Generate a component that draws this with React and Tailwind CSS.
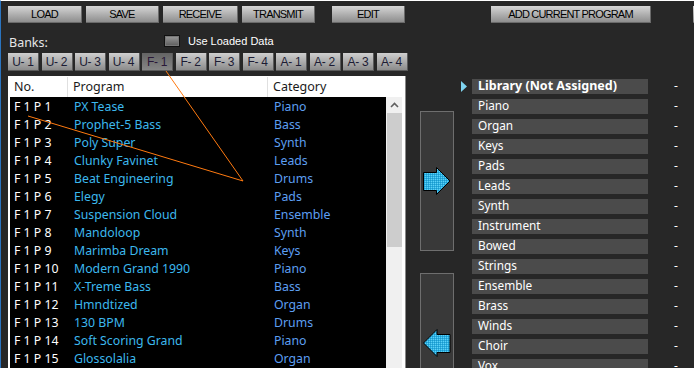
import React from "react";

const rows = [
  ["F 1 P 1", "PX Tease", "Piano"],
  ["F 1 P 2", "Prophet-5 Bass", "Bass"],
  ["F 1 P 3", "Poly Super", "Synth"],
  ["F 1 P 4", "Clunky Favinet", "Leads"],
  ["F 1 P 5", "Beat Engineering", "Drums"],
  ["F 1 P 6", "Elegy", "Pads"],
  ["F 1 P 7", "Suspension Cloud", "Ensemble"],
  ["F 1 P 8", "Mandoloop", "Synth"],
  ["F 1 P 9", "Marimba Dream", "Keys"],
  ["F 1 P 10", "Modern Grand 1990", "Piano"],
  ["F 1 P 11", "X-Treme Bass", "Bass"],
  ["F 1 P 12", "Hmndtized", "Organ"],
  ["F 1 P 13", "130 BPM", "Drums"],
  ["F 1 P 14", "Soft Scoring Grand", "Piano"],
  ["F 1 P 15", "Glossolalia", "Organ"],
];

const cats = [
  "Library (Not Assigned)",
  "Piano",
  "Organ",
  "Keys",
  "Pads",
  "Leads",
  "Synth",
  "Instrument",
  "Bowed",
  "Strings",
  "Ensemble",
  "Brass",
  "Winds",
  "Choir",
  "Vox",
];

const banks = ["U- 1", "U- 2", "U- 3", "U- 4", "F- 1", "F- 2", "F- 3", "F- 4", "A- 1", "A- 2", "A- 3", "A- 4"];

function TopBtn({ w, children }) {
  return (
    <div
      className="h-[17px] flex items-center justify-center bg-gradient-to-b from-[#d6d6d6] to-[#8e8e8e] border-b border-r border-[#6a6a6a] text-[11px] tracking-[-0.8px] text-black leading-none shrink-0"
      style={{ width: w, fontFamily: '"Liberation Sans", Arial, sans-serif' }}
    >
      {children}
    </div>
  );
}

function Gap({ w }) {
  return <div className="shrink-0" style={{ width: w }} />;
}

function Arrow({ dir }) {
  const pts =
    dir === "right"
      ? "0.5,5.5 13.5,5.5 13.5,0.5 27,14 13.5,27.5 13.5,23.5 0.5,23.5"
      : "27,5.5 14,5.5 14,0.5 0.5,14 14,27.5 14,23.5 27,23.5";
  const id = "dither-" + dir;
  return (
    <svg width="28" height="29" viewBox="0 0 28 29">
      <defs>
        <pattern id={id} width="2" height="2" patternUnits="userSpaceOnUse">
          <rect width="2" height="2" fill="#2aaee0" />
          <rect width="1" height="1" fill="#5fd0f5" />
          <rect x="1" y="1" width="1" height="1" fill="#1a98cc" />
        </pattern>
      </defs>
      <polygon points={pts} fill={`url(#${id})`} stroke="#000" strokeWidth="1" />
    </svg>
  );
}

export default function App() {
  const sans = { fontFamily: '"Noto Sans", "Open Sans", sans-serif' };
  const arial = { fontFamily: '"Liberation Sans", Arial, sans-serif' };
  return (
    <div className="relative w-[694px] h-[368px] overflow-hidden bg-[#272727] border-t border-t-white border-l border-l-[#2a74c0]">
      {/* top buttons */}
      <div className="flex mt-[5px] ml-[7px] h-[17px]">
        <TopBtn w={74}>LOAD</TopBtn>
        <Gap w={4} />
        <TopBtn w={73}>SAVE</TopBtn>
        <Gap w={4} />
        <TopBtn w={75}>RECEIVE</TopBtn>
        <Gap w={4} />
        <TopBtn w={73}>TRANSMIT</TopBtn>
        <Gap w={17} />
        <TopBtn w={73}>EDIT</TopBtn>
        <Gap w={86} />
        <TopBtn w={160}>ADD CURRENT PROGRAM</TopBtn>
        <Gap w={42} />
        <TopBtn w={20}></TopBtn>
      </div>

      {/* banks label + checkbox */}
      <div className="flex items-center h-[16px] mt-[10px] ml-[8px]">
        <div className="text-[12.5px] text-[#e6e6e6] w-[155px] leading-none pt-[5px]" style={sans}>
          Banks:
        </div>
        <div className="w-[16px] h-[12px] border border-[#111] bg-gradient-to-b from-[#9a9a9a] to-[#5c5c5c] shadow-[inset_0_0_0_1px_#777]" />
        <div className="ml-[8px] text-[11px] text-white leading-none" style={arial}>
          Use Loaded Data
        </div>
      </div>

      {/* bank buttons */}
      <div className="flex gap-[2.5px] ml-[7px] mt-[4px] h-[18px]">
        {banks.map((b) => {
          const sel = b === "F- 1";
          return (
            <div
              key={b}
              className={
                "w-[31px] h-[18px] flex items-center justify-center text-[12px] tracking-[-0.3px] leading-none border-b border-r border-[#5a5a5a] " +
                (sel
                  ? "bg-gradient-to-b from-[#646464] to-[#868686] text-[#2a1838]"
                  : "bg-gradient-to-b from-[#cfcfcf] to-[#8c8c8c] text-[#1c1c34]")
              }
              style={arial}
            >
              {b}
            </div>
          );
        })}
      </div>

      {/* main area */}
      <div className="flex mt-[5px] ml-[7px]">
        {/* table */}
        <div className="w-[398px] h-[292px] bg-white pl-[2px] pr-[3px] border-r border-[#888] shrink-0" style={sans}>
          <div className="flex h-[21px] items-center text-[12.5px] text-[#1a1a1a] leading-none pt-[1px]">
            <div className="w-[58px] h-full flex items-center pl-[4px] border-r border-[#e0e0e0]">No.</div>
            <div className="w-[200px] h-full flex items-center pl-[5px] border-r border-[#e0e0e0]">Program</div>
            <div className="pl-[5px] h-full flex items-center">Category</div>
          </div>
          <div className="flex">
            <div className="w-[377px] h-[271px] bg-black">
              {rows.map((r) => (
                <div key={r[0]} className="flex h-[18px] items-center text-[12.3px] leading-none pt-[2px]">
                  <div className="w-[64px] pl-[4px] text-white">{r[0]}</div>
                  <div className="w-[200px] text-[#3cb8ee]">{r[1]}</div>
                  <div className="text-[#5d9ff2]">{r[2]}</div>
                </div>
              ))}
            </div>
            <div className="w-[16px] h-[271px] bg-[#f0f0f0] flex flex-col items-end">
              <div className="h-[16px] w-full flex items-center justify-center">
                <svg width="9" height="6" viewBox="0 0 9 6">
                  <path d="M1 5 L4.5 1.5 L8 5" fill="none" stroke="#606060" strokeWidth="1.6" />
                </svg>
              </div>
              <div className="w-[15px] h-[134px] bg-[#cdcdcd]" />
            </div>
          </div>
        </div>

        {/* arrow column */}
        <div className="ml-[14px] w-[34px] flex flex-col pt-[35px] shrink-0">
          <div className="h-[140px] border border-[#6e6e6e] bg-[#393939] flex items-center justify-center">
            <Arrow dir="right" />
          </div>
          <div className="h-[140px] mt-[22px] border border-[#6e6e6e] bg-[#393939] flex items-center justify-center">
            <Arrow dir="left" />
          </div>
        </div>

        {/* category list */}
        <div className="ml-[7px] flex flex-col" style={sans}>
          {cats.map((c, i) => (
            <div key={c} className="flex items-center h-[20px]">
              <div className="w-[11px] flex items-center">
                {i === 0 && (
                  <svg width="6" height="11" viewBox="0 0 6 11">
                    <polygon points="0,0 6,5.5 0,11" fill="#7fd4f0" />
                  </svg>
                )}
              </div>
              <div
                className={
                  "w-[176px] h-[15px] bg-[#4b4b4b] text-white leading-none flex items-center pl-[6px] " +
                  (i === 0 ? "font-bold text-[12.5px]" : "text-[11.8px]")
                }
              >
                {c}
              </div>
              <div className="ml-[26px] text-white text-[12px] leading-none">-</div>
            </div>
          ))}
        </div>
      </div>

      {/* orange lines overlay */}
      <svg className="absolute left-0 top-0 pointer-events-none" width="694" height="368">
        <line x1="165" y1="70" x2="242" y2="180" stroke="#ff7a10" strokeWidth="1" />
        <line x1="27" y1="115" x2="242" y2="180" stroke="#ff7a10" strokeWidth="1" />
      </svg>
    </div>
  );
}
